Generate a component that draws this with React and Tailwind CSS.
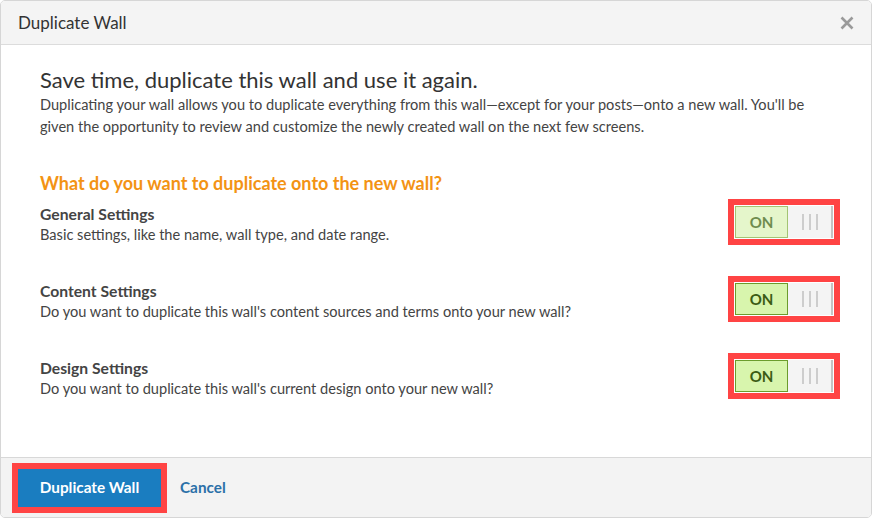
import React from 'react';

const rows = [
  { title: 'General Settings', desc: 'Basic settings, like the name, wall type, and date range.', faded: true },
  { title: 'Content Settings', desc: "Do you want to duplicate this wall's content sources and terms onto your new wall?" },
  { title: 'Design Settings', desc: "Do you want to duplicate this wall's current design onto your new wall?" },
];

const Toggle = ({ faded }) => (
  <div className="border-[6px] border-[#ff4444] p-px bg-white">
    <div className="flex h-[32px] w-[98px]">
      <div className={`w-[53px] flex items-center justify-center border text-[15px] font-bold ${faded ? 'bg-[#e5f6cb] border-[#a3c473] text-[#6f8c4f]' : 'bg-[#d8f5ad] border-[#6b9c2c] text-[#3b5c14]'}`}>
        ON
      </div>
      <div className="flex-1 flex items-center justify-center gap-[5px] bg-[#f4f4f4] border-r-2 border-[#c4c4c4]">
        <span className="w-[2px] h-[16px] bg-[#cdcdcd]" />
        <span className="w-[2px] h-[16px] bg-[#cdcdcd]" />
        <span className="w-[2px] h-[16px] bg-[#cdcdcd]" />
      </div>
    </div>
  </div>
);

export default function App() {
  return (
    <div className="w-[872px] h-[518px] bg-white" style={{ fontFamily: 'Lato, "Open Sans", sans-serif' }}>
      <div className="h-full border border-[#d6d6d6] rounded-[5px] overflow-hidden flex flex-col">
        <div className="h-[44px] shrink-0 bg-[#f4f4f4] border-b border-[#dcdcdc] flex items-center justify-between pl-[17px] pr-[16px]">
          <span className="text-[17px] text-[#333]">Duplicate Wall</span>
          <svg width="16" height="16" viewBox="0 0 16 16" className="text-[#9a9a9a]">
            <path d="M2.5 2.5 L13.5 13.5 M13.5 2.5 L2.5 13.5" stroke="currentColor" strokeWidth="2.6" />
          </svg>
        </div>

        <div className="flex-1 pl-[39px] pr-[31px] pt-[22px]">
          <h1 className="text-[22px] leading-[26px] text-[#333]">Save time, duplicate this wall and use it again.</h1>
          <p className="text-[14.6px] leading-[22px] text-[#444] mt-px">
            Duplicating your wall allows you to duplicate everything from this wall—except for your posts—onto a new wall. You'll be given the opportunity to review and customize the newly created wall on the next few screens.
          </p>
          <h2 className="mt-[33px] text-[18px] leading-[24px] font-bold text-[#f39314]">What do you want to duplicate onto the new wall?</h2>
          <div className="mt-[4px] flex flex-col gap-[31px]">
            {rows.map((r, i) => (
              <div key={i} className="flex items-start justify-between">
                <div className="pt-[5px]">
                  <div className="text-[15.7px] leading-[20px] font-bold text-[#444]">{r.title}</div>
                  <div className="text-[14.6px] leading-[21px] text-[#444]">{r.desc}</div>
                </div>
                <Toggle faded={r.faded} />
              </div>
            ))}
          </div>
        </div>

        <div className="h-[60px] shrink-0 bg-[#f3f3f3] border-t border-[#d8d8d8] flex items-center pl-[11px] gap-[13px]">
          <div className="border-[6px] border-[#ff4444]">
            <button className="h-[38px] w-[143px] bg-[#1a7dc0] text-white text-[15.3px] font-bold">Duplicate Wall</button>
          </div>
          <span className="text-[15.3px] font-bold text-[#2b70a8]">Cancel</span>
        </div>
      </div>
    </div>
  );
}
